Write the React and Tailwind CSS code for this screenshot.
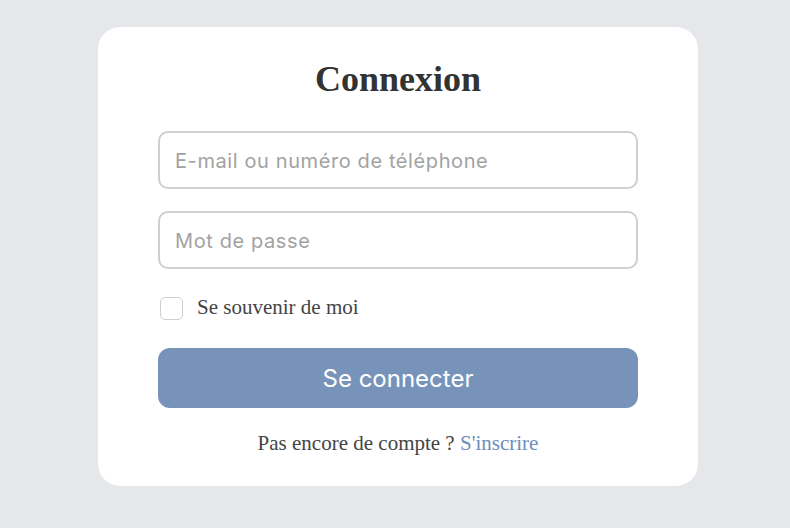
export default function App() {
  return (
    <div className="w-[790px] h-[528px] bg-[#e5e7eb] flex pl-[98px] pt-[27px]">
      <div className="w-[600px] h-[459px] bg-white rounded-[22px] px-[60px] pt-[31px] flex flex-col">
        <h1 className="text-center text-[36px] leading-[43px] font-bold text-[#333] [font-family:'Liberation_Serif',serif]">
          Connexion
        </h1>
        <input
          type="text"
          placeholder="E-mail ou numéro de téléphone"
          className="mt-[30px] h-[58px] w-full border-2 border-[#cfcfcf] rounded-[10px] px-[15px] pt-[2px] text-[20px] tracking-[0.6px] placeholder:text-[#a2a2a2] [font-family:Inter,sans-serif] outline-none"
        />
        <input
          type="password"
          placeholder="Mot de passe"
          className="mt-[22px] h-[58px] w-full border-2 border-[#cfcfcf] rounded-[10px] px-[15px] pt-[2px] text-[20px] tracking-[0.6px] placeholder:text-[#a2a2a2] [font-family:Inter,sans-serif] outline-none"
        />
        <label className="mt-[27px] h-[24px] flex items-center gap-[14px] pl-[2px]">
          <span className="w-[23px] h-[23px] border border-[#cfcfcf] rounded-[5px] bg-white"></span>
          <span className="text-[21px] text-[#444] [font-family:'Liberation_Serif',serif]">Se souvenir de moi</span>
        </label>
        <button className="mt-[28px] h-[60px] w-full rounded-[12px] bg-[#7893ba] text-white text-[24px] pt-[1px] [font-family:Inter,sans-serif]">
          Se connecter
        </button>
        <p className="mt-[23px] text-center text-[21px] leading-[24px] text-[#444] [font-family:'Liberation_Serif',serif]">
          Pas encore de compte ? <a className="text-[#6f8dbd]">S'inscrire</a>
        </p>
      </div>
    </div>
  );
}
